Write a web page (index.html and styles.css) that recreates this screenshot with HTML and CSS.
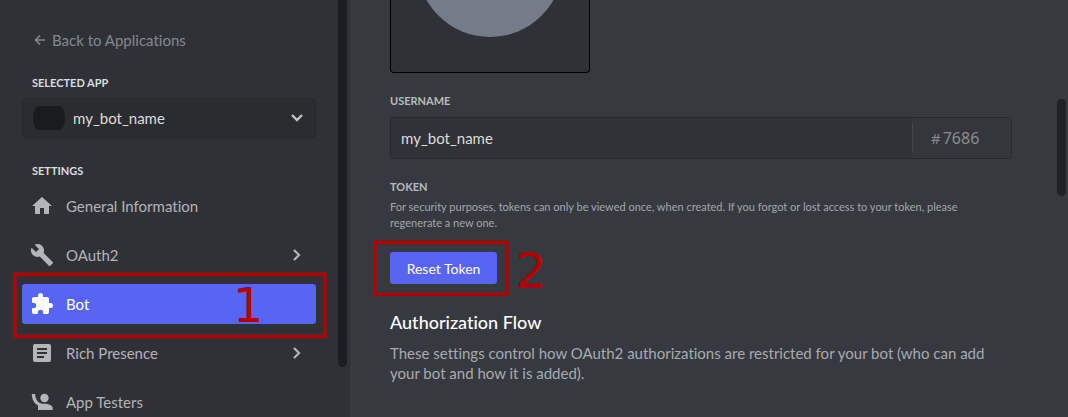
FILE: index.html
```html
<!DOCTYPE html>
<html lang="en">
<head>
<meta charset="utf-8">
<meta name="viewport" content="width=device-width, initial-scale=1">
<title>Bot settings</title>
<link rel="stylesheet" href="styles.css">
</head>
<body>
<div class="app">
  <aside class="sidebar">
    <a class="back" href="#">
      <svg class="back-icon" viewBox="0 0 12 12"><path d="M6 1.500 1.500 6 6 10.500M1.500 6H11" fill="none" stroke="currentColor" stroke-width="1.600"/></svg>
      Back to Applications
    </a>
    <label class="label sidebar-label" for="selected-app">SELECTED APP</label>
    <div class="app-picker">
      <select class="app-select" id="selected-app"><option>my_bot_name</option></select>
      <span class="app-avatar"></span>
      <svg class="app-chevron" viewBox="0 0 14 10"><path d="m2 2 5 5 5-5" fill="none" stroke="currentColor" stroke-width="2.400"/></svg>
    </div>
    <h2 class="label sidebar-label settings-label">SETTINGS</h2>
    <nav class="nav">
      <a class="nav-item" href="#">
        <svg class="nav-icon" viewBox="0 0 24 24"><path d="M10 20v-6h4v6h5v-8h3L12 3 2 12h3v8z" fill="currentColor"/></svg>
        <span class="nav-text">General Information</span>
      </a>
      <a class="nav-item" href="#">
        <svg class="nav-icon" viewBox="0 0 24 24"><path d="m22.700 19-9.100-9.100c.9-2.300.4-5-1.500-6.900-2-2-5-2.400-7.400-1.300L9 6 6 9 1.600 4.700C.4 7.100.9 10.100 2.900 12.100c1.900 1.900 4.600 2.400 6.900 1.500l9.100 9.100c.4.4 1 .4 1.400 0l2.300-2.300c.5-.4.5-1.100.1-1.400z" fill="currentColor"/></svg>
        <span class="nav-text">OAuth2</span>
        <svg class="nav-chevron" viewBox="0 0 10 14"><path d="m2 2 5 5-5 5" fill="none" stroke="currentColor" stroke-width="2.200"/></svg>
      </a>
      <a class="nav-item nav-item-active" href="#" aria-current="page">
        <svg class="nav-icon" viewBox="0 0 24 24"><path d="M20.500 11H19V7c0-1.100-.9-2-2-2h-4V3.500a2.500 2.500 0 0 0-5 0V5H4c-1.100 0-1.990.9-1.990 2v3.800H3.500a2.700 2.700 0 0 1 0 5.400H2V20c0 1.100.9 2 2 2h3.800v-1.500a2.700 2.700 0 0 1 5.400 0V22H17c1.100 0 2-.9 2-2v-4h1.500a2.500 2.500 0 0 0 0-5z" fill="currentColor"/></svg>
        <span class="nav-text">Bot</span>
        <span class="mark mark-bot"></span>
        <span class="step step-bot">1</span>
      </a>
      <a class="nav-item" href="#">
        <svg class="nav-icon" viewBox="0 0 24 24"><path fill-rule="evenodd" d="M5 3h14a2 2 0 0 1 2 2v14a2 2 0 0 1-2 2H5a2 2 0 0 1-2-2V5a2 2 0 0 1 2-2zm2 4v2h10V7zm0 4v2h10v-2zm0 4v2h7v-2z" fill="currentColor"/></svg>
        <span class="nav-text">Rich Presence</span>
        <svg class="nav-chevron" viewBox="0 0 10 14"><path d="m2 2 5 5-5 5" fill="none" stroke="currentColor" stroke-width="2.200"/></svg>
      </a>
      <a class="nav-item" href="#">
        <svg class="nav-icon" viewBox="0 0 24 24"><circle cx="14.500" cy="8" r="4.200" fill="currentColor"/><path d="M1.800 4h3.400c0 4.600 2.400 8.400 6 9.400 1.200.3 2.200.3 3.500.3 4 0 8 1.700 8 4.300v2H8v-4.600C4 13.300 1.800 9 1.800 4z" fill="currentColor"/></svg>
        <span class="nav-text">App Testers</span>
      </a>
    </nav>
    <div class="thumb thumb-sidebar"></div>
  </aside>

  <main class="main">
    <div class="icon-card"><div class="icon-circle"></div></div>
    <label class="label" for="username">USERNAME</label>
    <div class="name-field">
      <input class="name-input" id="username" type="text" value="my_bot_name">
      <div class="tag"><span class="tag-hash">#</span><span class="tag-number">7686</span></div>
    </div>
    <h2 class="label">TOKEN</h2>
    <p class="hint">For security purposes, tokens can only be viewed once, when created. If you forgot or lost access to your token, please regenerate a new one.</p>
    <div class="token-action">
      <button class="reset" type="button">Reset Token</button>
      <span class="mark mark-token"></span>
      <span class="step step-token">2</span>
    </div>
    <h1 class="title">Authorization Flow</h1>
    <p class="text">These settings control how OAuth2 authorizations are restricted for your bot (who can add your bot and how it is added).</p>
    <div class="thumb thumb-main"></div>
  </main>
</div>
</body>
</html>
```
FILE: styles.css
```css
* {
  box-sizing: border-box;
}

body {
  margin: 0;
  background: #36393f;
  color: #b9bbbe;
  font-family: Lato, "Open Sans", sans-serif;
  font-size: 15px;
  font-variant-ligatures: none;
}

h1, h2, p {
  margin: 0;
}

a {
  color: inherit;
  text-decoration: none;
}

.app {
  display: flex;
  height: 100vh;
  overflow: hidden;
}

.sidebar {
  position: relative;
  flex: 0 0 350px;
  padding: 30px 34px 0 22px;
  background: #2f3136;
}

.back {
  display: flex;
  align-items: center;
  gap: 6px;
  padding-left: 12px;
  line-height: 20px;
  color: #84898f;
}

.back-icon {
  width: 12px;
  height: 12px;
}

.label {
  display: block;
  font-size: 11px;
  font-weight: 700;
  line-height: 16px;
  color: #b9bbbe;
}

.sidebar-label {
  margin-top: 25px;
  padding-left: 10px;
  color: #dcddde;
}

.app-picker {
  position: relative;
  margin-top: 7px;
}

.app-select {
  display: block;
  width: 100%;
  height: 40px;
  padding: 0 40px 0 50px;
  border: 1px solid #26282c;
  border-radius: 4px;
  appearance: none;
  background: #2b2c30;
  color: #dcddde;
  font: inherit;
}

.app-avatar {
  position: absolute;
  top: 8px;
  left: 11px;
  width: 32px;
  height: 24px;
  border-radius: 6px / 12px;
  background: #1a1b1e;
  pointer-events: none;
}

.app-chevron {
  position: absolute;
  top: 15px;
  right: 12px;
  width: 14px;
  height: 10px;
  color: #c3c4c7;
  pointer-events: none;
}

.settings-label {
  margin-top: 25px;
}

.nav {
  display: grid;
  gap: 9px;
  margin-top: 7px;
}

.nav-item {
  position: relative;
  display: flex;
  align-items: center;
  gap: 12px;
  height: 40px;
  padding: 0 14px 0 8px;
  border-radius: 3px;
  color: #b3b5b9;
}

.nav-item-active {
  background: #5865f2;
  color: #fff;
}

.nav-icon {
  width: 24px;
  height: 24px;
}

.nav-text {
  flex: 1;
}

.nav-chevron {
  width: 10px;
  height: 14px;
}

.main {
  position: relative;
  flex: 1;
  padding: 0 56px 0 40px;
  background: #36393f;
}

.icon-card {
  width: 200px;
  height: 73px;
  margin-bottom: 20px;
  overflow: hidden;
  border: 1px solid #000;
  border-top: 0;
  border-radius: 0 0 4px 4px;
  background: #2f3136;
}

.icon-circle {
  width: 146px;
  height: 146px;
  margin: -109px auto 0;
  border-radius: 50%;
  background: #747c8a;
}

.name-field {
  display: flex;
  height: 42px;
  margin: 8px 0 20px;
  border: 1px solid #27292d;
  border-radius: 3px;
  background: #34363c;
}

.name-input {
  flex: 1;
  min-width: 0;
  padding: 0 10px;
  border: 0;
  background: #303238;
  color: #dcddde;
  font: inherit;
}

.tag {
  display: flex;
  align-items: center;
  gap: 2px;
  width: 99px;
  margin: 5px 0;
  padding-left: 18px;
  border-left: 1px solid #45474d;
  color: #8a8c90;
  font-family: "Noto Sans", sans-serif;
}

.tag-number {
  font-size: 16px;
}

.hint {
  max-width: 600px;
  margin-top: 4px;
  font-size: 11px;
  line-height: 16px;
  color: #a3a6aa;
}

.token-action {
  position: relative;
  width: max-content;
  margin: 21px 0 26px;
}

.reset {
  display: block;
  width: 107px;
  height: 32px;
  padding: 0;
  border: 0;
  border-radius: 3px;
  background: #5865f2;
  color: #fff;
  font: inherit;
  font-size: 14px;
}

.title {
  font-size: 18px;
  font-weight: 500;
  line-height: 24px;
  color: #fff;
}

.text {
  max-width: 620px;
  margin-top: 9px;
  line-height: 20px;
  color: #a9abaf;
}

.mark {
  position: absolute;
  border: 2px solid #b40000;
  outline: 1px solid #84171a;
  box-shadow: inset 0 0 0 1px #84171a;
  pointer-events: none;
}

.mark-bot {
  inset: -11px -10px -13px -8px;
}

.mark-token {
  inset: -11px -11px -11px -16px;
}

.step {
  position: absolute;
  color: #b40000;
  font-family: "DejaVu Sans", sans-serif;
  font-size: 48px;
  line-height: 56px;
  pointer-events: none;
}

.step-bot {
  top: -7px;
  left: 211px;
}

.step-token {
  top: -10px;
  left: 126px;
}

.thumb {
  position: absolute;
  width: 9px;
  background: #202225;
}

.thumb-sidebar {
  top: 0;
  right: 3px;
  height: 367px;
  border-radius: 0 0 5px 5px;
  background: #1c1d21;
}

.thumb-main {
  top: 99px;
  right: 2px;
  height: 97px;
  border-radius: 5px;
}
```
